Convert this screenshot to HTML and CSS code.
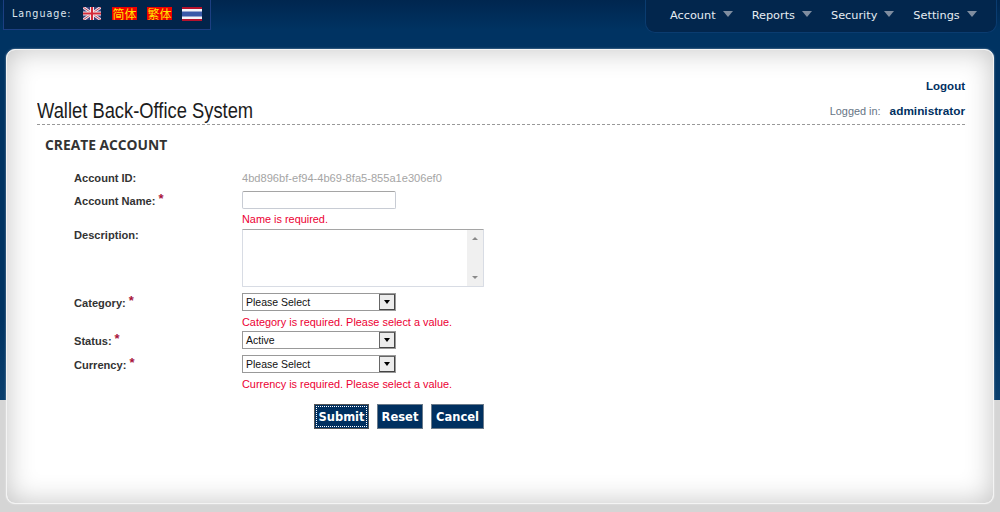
FILE: index.html
```html
<!DOCTYPE html>
<html lang="en">
<head>
<meta charset="utf-8">
<title>Wallet Back-Office System</title>
<link rel="stylesheet" href="styles.css">
</head>
<body>
<header class="topbar">
  <div class="lang">
    <span class="lang-label">Language:</span>
    <svg class="flag-uk" width="18" height="13" viewBox="0 0 18 13" aria-label="English">
      <rect width="18" height="13" fill="#3a3f7a"/>
      <path d="M0 0L18 13M18 0L0 13" stroke="#e8dfe6" stroke-width="3"/>
      <path d="M0 0L18 13M18 0L0 13" stroke="#c8445a" stroke-width="1"/>
      <path d="M9 0V13M0 6.500H18" stroke="#f0e8ea" stroke-width="4"/>
      <path d="M9 0V13M0 6.500H18" stroke="#d42a3a" stroke-width="2"/>
    </svg>
    <span class="flag-cn">简体</span>
    <span class="flag-cn">繁体</span>
    <svg class="flag-th" width="20" height="14" viewBox="0 0 20 14" aria-label="Thai">
      <rect width="20" height="14" fill="#f4f4f8"/>
      <rect width="20" height="2" fill="#b5122c"/>
      <rect y="12" width="20" height="2" fill="#b5122c"/>
      <rect y="4.500" width="20" height="5" fill="#3a5aa8"/>
    </svg>
  </div>
  <nav class="menu">
    <a class="menu-item">Account<i class="caret"></i></a>
    <a class="menu-item">Reports<i class="caret"></i></a>
    <a class="menu-item">Security<i class="caret"></i></a>
    <a class="menu-item">Settings<i class="caret"></i></a>
  </nav>
</header>
<main class="card">
  <div class="logout-row"><a class="logout">Logout</a></div>
  <div class="title-row">
    <h1 class="title">Wallet Back-Office System</h1>
    <div class="user"><span class="user-label">Logged in:</span><span class="user-name">administrator</span></div>
  </div>
  <h2 class="heading">CREATE ACCOUNT</h2>
  <form class="form">
    <div class="row row-id">
      <label class="label">Account ID:</label>
      <div class="value id-value">4bd896bf-ef94-4b69-8fa5-855a1e306ef0</div>
    </div>
    <div class="row row-name">
      <label class="label">Account Name:<span class="req">*</span></label>
      <div class="value">
        <input class="input" type="text">
        <div class="error">Name is required.</div>
      </div>
    </div>
    <div class="row row-desc">
      <label class="label">Description:</label>
      <div class="value">
        <div class="textarea-wrap">
          <textarea class="textarea"></textarea>
          <div class="scroll"><i class="sc-up"></i><i class="sc-down"></i></div>
        </div>
      </div>
    </div>
    <div class="row row-cat">
      <label class="label">Category:<span class="req">*</span></label>
      <div class="value">
        <div class="select"><span class="select-text">Please Select</span><span class="select-btn"><i></i></span></div>
        <div class="error error-select">Category is required. Please select a value.</div>
      </div>
    </div>
    <div class="row row-status">
      <label class="label">Status:<span class="req">*</span></label>
      <div class="value">
        <div class="select"><span class="select-text">Active</span><span class="select-btn"><i></i></span></div>
      </div>
    </div>
    <div class="row row-cur">
      <label class="label">Currency:<span class="req">*</span></label>
      <div class="value">
        <div class="select"><span class="select-text">Please Select</span><span class="select-btn"><i></i></span></div>
        <div class="error error-select">Currency is required. Please select a value.</div>
      </div>
    </div>
    <div class="actions">
      <button class="btn btn-submit" type="button">Submit</button>
      <button class="btn btn-reset" type="button">Reset</button>
      <button class="btn btn-cancel" type="button">Cancel</button>
    </div>
  </form>
</main>
</body>
</html>
```

FILE: styles.css
```css
* { box-sizing: border-box; }
html, body { margin: 0; height: 512px; overflow: hidden; }
body {
  background: linear-gradient(180deg, #00264f 0, #003362 30px, #003362 320px, #0a3f6e 400px, #d5d5d5 400px, #d5d5d5 100%);
  font-family: "Liberation Sans", Arial, sans-serif;
  font-size: 11px;
}
.topbar { display: flex; justify-content: space-between; align-items: flex-start; height: 49px; padding: 0 3px; }
.lang {
  width: 208px; height: 30px; display: flex; align-items: center; padding: 0 0 2px 8px;
  background: #02244a; border: 1px solid #1c3f82; border-top: 0;
  color: #dfe6ee;
}
.lang-label { font-family: "DejaVu Sans", sans-serif; font-size: 9.6px; letter-spacing: 1px; width: 71px; }
.flag-uk { margin-right: 11px; }
.flag-cn {
  width: 25px; height: 13px; background: #f00000; color: #ffe600; margin-right: 10px;
  font-family: "Noto Sans CJK SC", sans-serif; font-size: 12px; line-height: 13px; text-align: center;
}
.menu {
  display: flex; width: 352px; height: 33px; padding: 0 0 2px 24px; gap: 19px; align-items: center;
  background: #02264d; border: 1px solid #0a3c70; border-top: 0; border-radius: 0 0 10px 10px;
}
.menu-item { display: flex; align-items: center; color: #e6edf3; font-family: "DejaVu Sans", sans-serif; font-size: 11.3px; }
.caret { margin-left: 7px; margin-top: -3px; border: 5px solid transparent; border-top: 6px solid #7f8da0; border-bottom: 0; width: 0; height: 0; }

.card {
  height: 455px; margin: 0 6px; padding: 28px 28px 0 30px;
  background: #fff; border: 1px solid #f4f4f4; border-radius: 9px;
  box-shadow: inset 0 0 28px rgba(0,0,0,.24), 0 0 2px rgba(255,255,255,.6);
}
.logout-row { display: flex; justify-content: flex-end; height: 20px; }
.logout { color: #00305f; font-weight: bold; font-size: 11.5px; line-height: 16px; }
.title-row {
  display: flex; justify-content: space-between; align-items: flex-start;
  height: 27px; border-bottom: 1px dashed #999;
}
.title {
  margin: 1px 0 0; font-family: "Liberation Sans", sans-serif; font-weight: normal; font-size: 22px; line-height: 24px; color: #1c1c1c;
  transform: scaleX(.834); transform-origin: left center; white-space: nowrap;
}
.user { display: flex; gap: 9px; line-height: 14px; margin-top: 6px; }
.user-label { color: #667585; font-size: 10.9px; }
.user-name { color: #00305f; font-weight: bold; font-size: 11.8px; }
.heading { margin: 12px 0 0 8px; font-family: "Open Sans", sans-serif; font-weight: bold; font-size: 13.8px; line-height: 16px; color: #333; }

.form { margin: 15px 0 0 37px; }
.row { display: flex; align-items: flex-start; }
.label { width: 168px; flex: none; color: #333; font-weight: bold; font-size: 11.1px; line-height: 14px; }
.req { color: #a8143c; font-size: 13px; margin-left: 3px; position: relative; top: -2px; }
.value { width: 242px; }
.row-id { height: 23px; padding-bottom: 4px; align-items: center; }
.id-value { color: #a5a5a5; font-size: 11.1px; line-height: 14px; }
.row-name { height: 38px; }
.row-name .label { margin-top: 3px; }
.row-desc { height: 64px; }
.row-desc .label { margin-top: -1px; }
.row-cat { height: 38px; }
.row-cat .label, .row-status .label, .row-cur .label { margin-top: 3px; }
.row-status { height: 24px; }
.row-cur { height: 38px; }

.input { display: block; width: 154px; height: 18px; padding: 0; background: #fff; border: 1px solid #c8ccd4; border-top-color: #a5a5a5; border-radius: 2px; }
.error { color: #ec0033; font-size: 10.9px; line-height: 14px; margin-top: 3px; }
.error-select { margin-top: 4px; }
.textarea-wrap { display: flex; width: 242px; height: 58px; background: #fff; border: 1px solid #d8dce4; border-top-color: #a5a5a5; border-radius: 1px; }
.textarea { flex: 1; min-width: 0; border: 0; padding: 0; resize: none; outline: none; background: #fff; }
.scroll { width: 16px; display: flex; flex-direction: column; justify-content: space-between; align-items: center; padding: 7px 0; background: #f0f0f0; }
.sc-up { width: 0; height: 0; border: 3.5px solid transparent; border-bottom: 3px solid #8a8a8a; border-top: 0; }
.sc-down { width: 0; height: 0; border: 3.5px solid transparent; border-top: 3px solid #8a8a8a; border-bottom: 0; }

.select { display: flex; width: 154px; height: 18px; background: #fff; border: 1px solid #999; }
.select-text { flex: 1; padding-left: 3px; color: #111; font-size: 10.5px; line-height: 16px; }
.select-btn { width: 16px; display: flex; align-items: center; justify-content: center; background: #ececec; border: 1px solid; border-color: #666 #444 #444 #666; }
.select-btn i { width: 0; height: 0; border: 3.5px solid transparent; border-top: 4px solid #000; border-bottom: 0; }

.actions { display: flex; gap: 8px; margin: 11px 0 0 240px; }
.btn {
  height: 25px; padding: 1px 0 0; background: #003060; color: #fff; border: 1px solid #6a7a8a;
  font-family: "DejaVu Sans", sans-serif; font-weight: bold; font-size: 11.5px;
}
.btn-submit { width: 55px; outline: 1px dotted #fff; outline-offset: -3px; border: 1px solid #555; }
.btn-reset { width: 46px; }
.btn-cancel { width: 53px; }
```
